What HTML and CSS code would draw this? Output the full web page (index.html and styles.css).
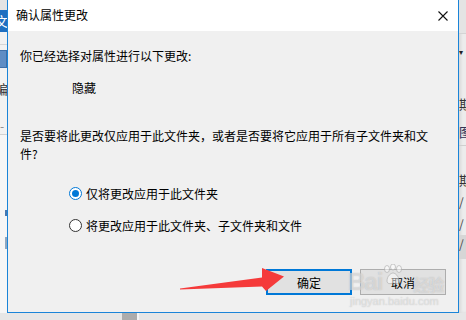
FILE: index.html
```html
<!DOCTYPE html>
<html lang="zh-CN">
<head>
    <meta charset="UTF-8">
    <title>确认属性更改</title>
    <link rel="stylesheet" href="styles.css">
</head>
<body>
    <div class="desk">
        <!-- explorer window peeking out on the left -->
        <div class="side side-left">
            <div class="strip-top"></div>
            <div class="ribbon-tab"><span>文</span></div>
            <div class="strip-gap"></div>
            <div class="tool-btn"></div>
            <div class="clip-text">编</div>
            <div class="strip-dash">-</div>
            <div class="strip-rest">
                <span class="dot dot-a"></span>
                <span class="dot dot-b"></span>
            </div>
        </div>

        <div class="dialog">
            <div class="title-bar">
                <span class="title">确认属性更改</span>
                <svg class="close" width="10" height="10" viewBox="0 0 10 10">
                    <path d="M0.5 0.5L9.5 9.5M9.5 0.5L0.5 9.5" stroke="#111" stroke-width="1.1" fill="none"/>
                </svg>
            </div>
            <div class="dialog-body">
                <p class="line">你已经选择对属性进行以下更改:</p>
                <p class="line change">隐藏</p>
                <p class="question">是否要将此更改仅应用于此文件夹，或者是否要将它应用于所有子文件夹和文件?</p>
                <label class="radio-row first">
                    <span class="radio checked"></span>
                    仅将更改应用于此文件夹
                </label>
                <label class="radio-row">
                    <span class="radio"></span>
                    将更改应用于此文件夹、子文件夹和文件
                </label>
                <div class="buttons">
                    <button class="btn btn-default">确定</button>
                    <button class="btn">取消</button>
                </div>
            </div>
        </div>

        <!-- explorer window on the right -->
        <div class="side side-right">
            <div class="strip-top"></div>
            <div class="caret">▾</div>
            <div class="clip-text r-1">期</div>
            <div class="clip-text r-2">图</div>
            <div class="rule"></div>
            <div class="clip-text r-3">期</div>
            <div class="slash">/</div>
            <div class="slash">/</div>
            <div class="slash shaded">/</div>
        </div>

        <div class="bottom-strip">
            <span class="scroll-thumb"></span>
        </div>
    </div>

    <div class="watermark">
        <div class="wm-logo">
            Bai
            <svg class="paw" width="20" height="22" viewBox="0 0 20 22">
                <g fill="rgba(255,255,255,0.5)" stroke="rgba(160,160,160,0.55)" stroke-width="1">
                    <ellipse cx="4" cy="5" rx="2.5" ry="3.5"/>
                    <ellipse cx="10" cy="3" rx="2.5" ry="3"/>
                    <ellipse cx="16" cy="5" rx="2.5" ry="3.5"/>
                    <path d="M4 17c0-5 4-8 6-8s6 3 6 8c0 3-3 3-6 2-3 1-6 1-6-2z"/>
                </g>
            </svg>
            <span class="wm-cn">经验</span>
        </div>
        <div class="wm-url">jingyan.baidu.com</div>
    </div>

    <svg class="arrow" width="466" height="320" viewBox="0 0 466 320">
        <polygon points="180,288.5 262,277.5 262,268 284,276.5 266,291 262,286.5 180,289.5" fill="#f53a3a"/>
    </svg>
</body>
</html>
```

FILE: styles.css
```css
:root {
    --win-blue: #1a84d8;
    --accent: #0078d7;
    --face: #f0f0f0;
    --btn-face: #e1e1e1;
    --text: #000;
}

body {
    margin: 0;
    width: 466px;
    height: 320px;
    overflow: hidden;
    font-family: "Microsoft YaHei UI", "Noto Sans CJK SC", sans-serif;
    font-size: 12px;
    color: var(--text);
    background: #e9e9e9;
    position: relative;
}

.desk {
    display: grid;
    grid-template-columns: 7px 452px 7px;
    grid-template-rows: 313px 7px;
}

/* side strips */
.side {
    display: flex;
    flex-direction: column;
    overflow: hidden;
    background: #f2f2f2;
}

.strip-top {
    height: 10px;
    background: #e4e4e4;
}

.ribbon-tab {
    height: 22px;
    background: #1f6fc0;
    color: #fff;
    font-size: 13px;
    line-height: 22px;
    overflow: hidden;
}

.ribbon-tab span {
    margin-left: -5px;
}

.strip-gap {
    height: 12px;
    border-bottom: 1px solid #d6d6d6;
}

.tool-btn {
    height: 16px;
    margin-top: 5px;
    background: #5f8dc4;
    border: 1px solid #3f6fa8;
    border-left: 0;
}

.clip-text {
    font-size: 13px;
    line-height: 18px;
    color: #333;
    white-space: nowrap;
    overflow: hidden;
}

.side-left .clip-text {
    margin-top: 12px;
    text-indent: -5px;
}

.strip-dash {
    margin-top: 22px;
    height: 14px;
    line-height: 12px;
    color: #888;
    border-bottom: 1px solid #d2d2d2;
}

.strip-rest {
    flex: 1;
    position: relative;
    background: #f6f6f6;
}

.dot {
    position: absolute;
    right: 0;
    width: 2px;
    height: 6px;
    background: #4878b0;
}

.dot-a { top: 75px; }
.dot-b { top: 102px; height: 12px; background: #8fa7c0; }

.side-right {
    background: #ececec;
    box-shadow: inset 2px 0 3px rgba(0, 0, 0, 0.08);
}

.side-right .strip-top {
    height: 33px;
    border-bottom: 1px solid #d4d4d4;
}

.caret {
    margin-top: 13px;
    font-size: 8px;
    line-height: 10px;
    color: #222;
}

.r-1 { margin-top: 38px; }
.r-2 { margin-top: 10px; color: #335; }

.rule {
    margin-top: 4px;
    height: 1px;
    background: #cfcfcf;
}

.r-3 { margin-top: 25px; }

.slash {
    margin-top: 4px;
    height: 18px;
    line-height: 18px;
    color: #444;
    font-size: 12px;
}

.slash.shaded {
    background: #d6d6d6;
    margin-top: 2px;
    height: 24px;
}

.bottom-strip {
    grid-column: 1 / -1;
    background: #e6e6e6;
    display: flex;
    padding-left: 122px;
}

.scroll-thumb {
    width: 15px;
    background: #acacac;
    border-right: 2px solid #f4f4f4;
}

/* dialog */
.dialog {
    display: flex;
    flex-direction: column;
    border: 1px solid var(--win-blue);
    border-top: 0;
    background: var(--face);
}

.title-bar {
    height: 31px;
    flex: none;
    display: flex;
    align-items: center;
    justify-content: space-between;
    padding: 0 10px 0 8px;
    background: #fff;
}

.title {
    line-height: 18px;
    margin-top: -1px;
}

.close {
    display: block;
}

.dialog-body {
    flex: 1;
    display: flex;
    flex-direction: column;
    padding: 0 12px 17px;
}

.line,
.question {
    margin: 0;
    line-height: 18px;
}

.line {
    margin-top: 16px;
}

.line.change {
    margin-top: 14px;
    padding-left: 52px;
}

.question {
    margin-top: 30px;
    width: 414px;
}

.radio-row {
    display: flex;
    align-items: center;
    gap: 4px;
    height: 18px;
    margin-top: 14px;
    padding-left: 49px;
}

.radio-row.first {
    margin-top: 21px;
}

.radio {
    box-sizing: border-box;
    width: 13px;
    height: 13px;
    border: 1px solid #333;
    border-radius: 50%;
    background: #fff;
    display: flex;
    align-items: center;
    justify-content: center;
}

.radio.checked {
    border-color: var(--accent);
}

.radio.checked::after {
    content: "";
    width: 7px;
    height: 7px;
    border-radius: 50%;
    background: var(--accent);
}

.buttons {
    margin-top: auto;
    display: flex;
    justify-content: flex-end;
    gap: 8px;
}

.btn {
    box-sizing: border-box;
    width: 86px;
    height: 26px;
    padding: 0;
    font: inherit;
    color: var(--text);
    background: var(--btn-face);
    border: 1px solid #adadad;
}

.btn-default {
    border: 2px solid var(--accent);
}

/* overlays */
.watermark {
    position: absolute;
    left: 348px;
    top: 262px;
    color: rgba(255, 255, 255, 0.45);
    text-shadow: 0 0 1px rgba(140, 140, 140, 0.55);
    font-family: "Liberation Sans", Arial, sans-serif;
    pointer-events: none;
}

.wm-logo {
    display: flex;
    align-items: flex-end;
    height: 33px;
    font-size: 24px;
    font-weight: bold;
    line-height: 26px;
    letter-spacing: -1px;
}

.wm-logo .paw {
    margin: 0 4px 9px 1px;
}

.wm-cn {
    font-family: "Noto Sans CJK SC", sans-serif;
    font-size: 16px;
    line-height: 22px;
    margin-left: 6px;
}

.wm-url {
    font-size: 11px;
    line-height: 12px;
    margin-top: 0;
    padding-left: 2px;
}

.arrow {
    position: absolute;
    left: 0;
    top: 0;
    pointer-events: none;
}
```
